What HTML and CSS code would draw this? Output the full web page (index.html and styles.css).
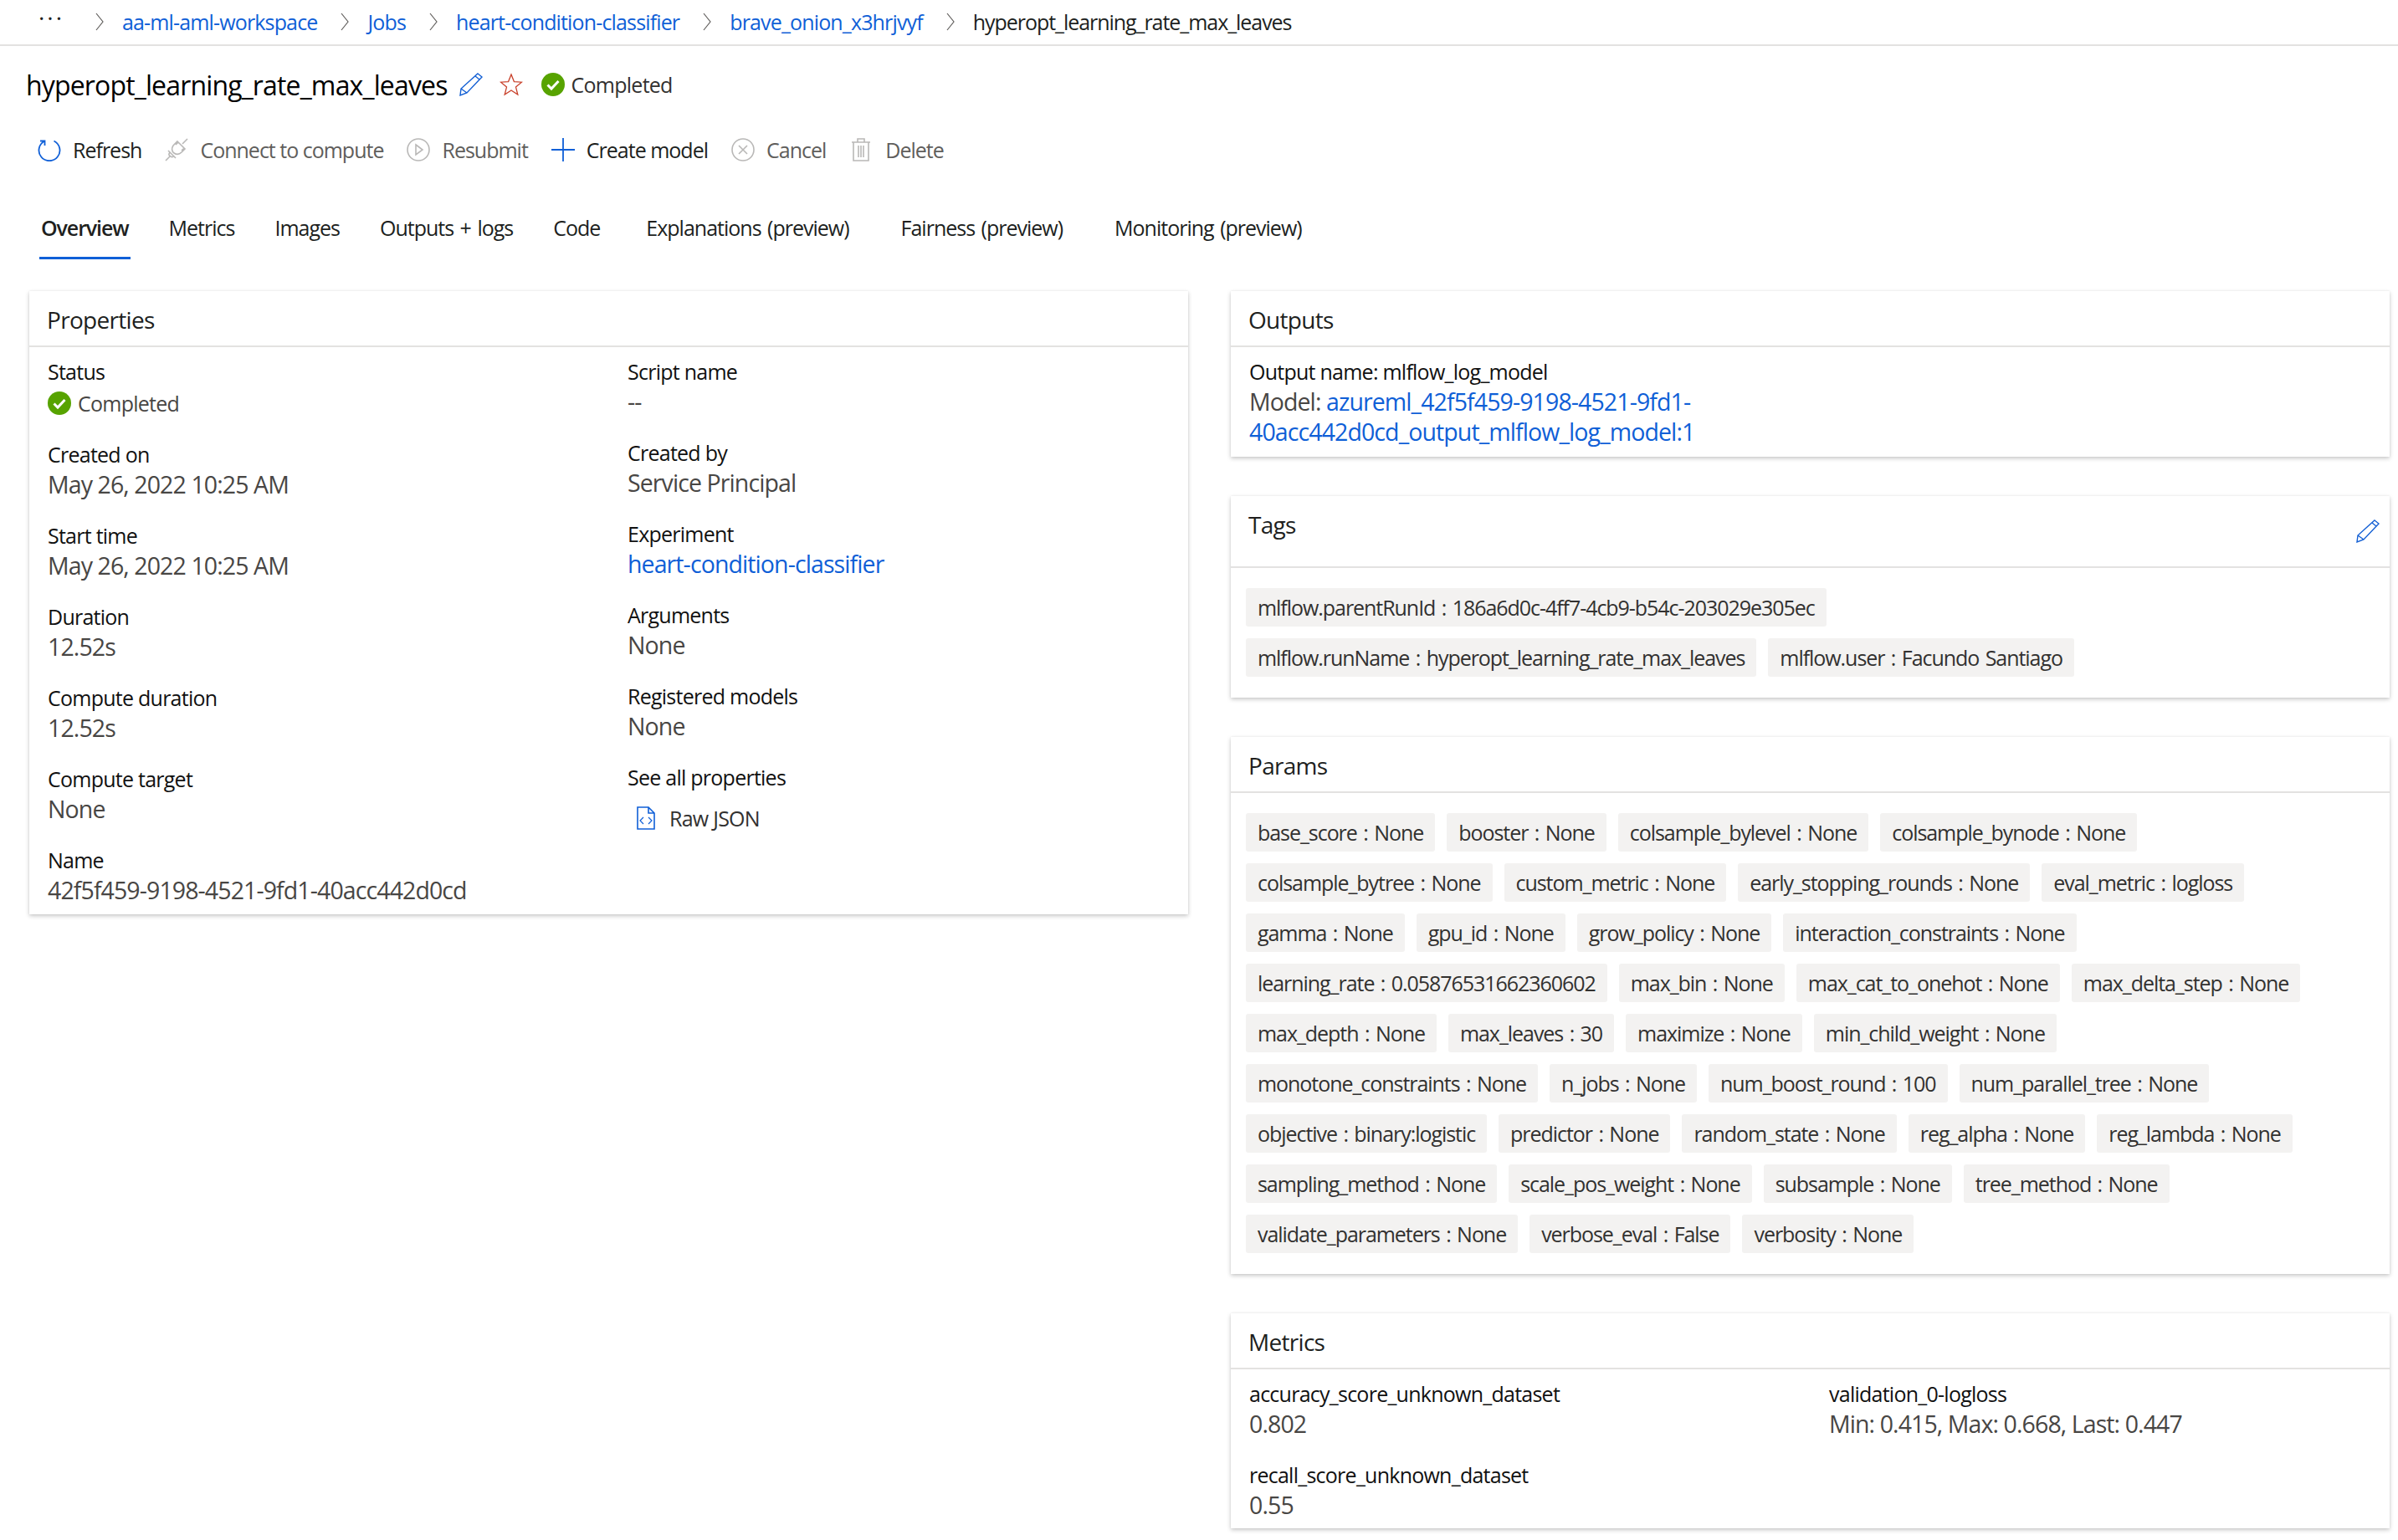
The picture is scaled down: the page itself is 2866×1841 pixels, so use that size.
FILE: index.html
```html
<!DOCTYPE html>
<html>
<head>
<title>hyperopt_learning_rate_max_leaves</title>
<link rel="stylesheet" href="styles.css">
</head>
<body>
  <div class="crumbs">
    <span class="dots">&middot;&middot;&middot;</span>
    <svg class="chev" viewBox="0 0 12 24"><path d="M2 2l8 10-8 10"/></svg>
    <a href="#">aa-ml-aml-workspace</a>
    <svg class="chev" viewBox="0 0 12 24"><path d="M2 2l8 10-8 10"/></svg>
    <a href="#">Jobs</a>
    <svg class="chev" viewBox="0 0 12 24"><path d="M2 2l8 10-8 10"/></svg>
    <a href="#">heart-condition-classifier</a>
    <svg class="chev" viewBox="0 0 12 24"><path d="M2 2l8 10-8 10"/></svg>
    <a href="#">brave_onion_x3hrjvyf</a>
    <svg class="chev" viewBox="0 0 12 24"><path d="M2 2l8 10-8 10"/></svg>
    <span class="crumb-here">hyperopt_learning_rate_max_leaves</span>
  </div>

  <div class="title-row">
    <h1>hyperopt_learning_rate_max_leaves</h1>
    <svg class="icon pencil" viewBox="0 0 28 28"><path d="M22 1l5 4L9 24l-8 3 1-8zM19 4l5 4M2 19l7 5"/></svg>
    <svg class="icon star" viewBox="0 0 28 28"><path d="M14 2l3.4 8.6 9.1.6-7 5.900 2.300 8.900-7.800-5-7.800 5 2.300-8.900-7-5.900 9.100-.6z"/></svg>
    <svg class="icon ok" viewBox="0 0 28 28"><circle cx="14" cy="14" r="14"/><path d="M7.500 14.500l4.500 4.500 8.500-9"/></svg>
    <span class="status">Completed</span>
  </div>

  <div class="toolbar">
    <div class="tool"><svg class="icon blue" viewBox="0 0 28 28"><path d="M8.500 3.500A12.500 12.500 0 1 0 19.500 3.500M8.500 9V3.500H3"/></svg>Refresh</div>
    <div class="tool off"><svg class="icon" viewBox="0 0 28 28"><path d="M1 27l6-6M21 7l6-6M15 4l9 9-4 4c-3 3-6 3-9 1s-3-6-1-9zM4 15l9 9M6 17c-2 3-1 4 1 5 1 1 3 1 4-1M13 8l3-3M20 15l3-3"/></svg>Connect to compute</div>
    <div class="tool off"><svg class="icon" viewBox="0 0 28 28"><circle cx="14" cy="14" r="13"/><path d="M11 8l8 6-8 6z"/></svg>Resubmit</div>
    <div class="tool"><svg class="icon blue" viewBox="0 0 28 28"><path d="M14 0v28M0 14h28"/></svg>Create model</div>
    <div class="tool off"><svg class="icon" viewBox="0 0 28 28"><circle cx="14" cy="14" r="13"/><path d="M9 9l10 10M19 9L9 19"/></svg>Cancel</div>
    <div class="tool off trash"><svg class="icon" viewBox="0 0 24 28"><path d="M1 5h22M3 5v22h18V5M8 5V1h8v4M9 9v14M12 9v14M15 9v14"/></svg>Delete</div>
  </div>

  <div class="tabs">
    <a class="tab active" href="#">Overview</a>
    <a class="tab" href="#">Metrics</a>
    <a class="tab" href="#">Images</a>
    <a class="tab" href="#">Outputs + logs</a>
    <a class="tab" href="#">Code</a>
    <a class="tab wide" href="#">Explanations (preview)</a>
    <a class="tab wide" href="#">Fairness (preview)</a>
    <a class="tab wide" href="#">Monitoring (preview)</a>
  </div>

  <div class="content">
    <div class="card props">
      <div class="card-head">Properties</div>
      <div class="prop-grid">
        <div>
          <div class="item status-item">
            <div class="label">Status</div>
            <div class="value with-icon"><svg class="icon ok" viewBox="0 0 28 28"><circle cx="14" cy="14" r="14"/><path d="M7.500 14.500l4.500 4.500 8.500-9"/></svg><span class="small">Completed</span></div>
          </div>
          <div class="item"><div class="label">Created on</div><div class="value">May 26, 2022 10:25 AM</div></div>
          <div class="item"><div class="label">Start time</div><div class="value">May 26, 2022 10:25 AM</div></div>
          <div class="item"><div class="label">Duration</div><div class="value">12.52s</div></div>
          <div class="item"><div class="label">Compute duration</div><div class="value">12.52s</div></div>
          <div class="item"><div class="label">Compute target</div><div class="value">None</div></div>
          <div class="item"><div class="label">Name</div><div class="value">42f5f459-9198-4521-9fd1-40acc442d0cd</div></div>
        </div>
        <div>
          <div class="item"><div class="label">Script name</div><div class="value">--</div></div>
          <div class="item"><div class="label">Created by</div><div class="value">Service Principal</div></div>
          <div class="item"><div class="label">Experiment</div><div class="value"><a href="#">heart-condition-classifier</a></div></div>
          <div class="item"><div class="label">Arguments</div><div class="value">None</div></div>
          <div class="item"><div class="label">Registered models</div><div class="value">None</div></div>
          <div class="item">
            <div class="label">See all properties</div>
            <div class="raw"><svg class="icon file" viewBox="0 0 24 28"><path d="M2 1h13l7 7v19H2zM15 1v7h7"/><path class="thin" d="M9 13l-4 4 4 4M15 13l4 4-4 4"/></svg>Raw JSON</div>
          </div>
        </div>
      </div>
    </div>

    <div class="side">
      <div class="card">
        <div class="card-head">Outputs</div>
        <div class="card-body">
          <div class="label">Output name: mlflow_log_model</div>
          <div class="value">Model: <a href="#">azureml_42f5f459-9198-4521-9fd1-<br>40acc442d0cd_output_mlflow_log_model:1</a></div>
        </div>
      </div>

      <div class="card">
        <div class="card-head tags-head">Tags
          <svg class="icon pencil" viewBox="0 0 28 28"><path d="M22 1l5 4L9 24l-8 3 1-8zM19 4l5 4M2 19l7 5"/></svg>
        </div>
        <div class="chips">
          <div class="chip-row"><span class="chip">mlflow.parentRunId : 186a6d0c-4ff7-4cb9-b54c-203029e305ec</span></div>
          <div class="chip-row"><span class="chip">mlflow.runName : hyperopt_learning_rate_max_leaves</span><span class="chip">mlflow.user : Facundo Santiago</span></div>
        </div>
      </div>

      <div class="card">
        <div class="card-head">Params</div>
        <div class="chips">
          <div class="chip-row"><span class="chip">base_score : None</span><span class="chip">booster : None</span><span class="chip">colsample_bylevel : None</span><span class="chip">colsample_bynode : None</span></div>
          <div class="chip-row"><span class="chip">colsample_bytree : None</span><span class="chip">custom_metric : None</span><span class="chip">early_stopping_rounds : None</span><span class="chip">eval_metric : logloss</span></div>
          <div class="chip-row"><span class="chip">gamma : None</span><span class="chip">gpu_id : None</span><span class="chip">grow_policy : None</span><span class="chip">interaction_constraints : None</span></div>
          <div class="chip-row"><span class="chip">learning_rate : 0.05876531662360602</span><span class="chip">max_bin : None</span><span class="chip">max_cat_to_onehot : None</span><span class="chip">max_delta_step : None</span></div>
          <div class="chip-row"><span class="chip">max_depth : None</span><span class="chip">max_leaves : 30</span><span class="chip">maximize : None</span><span class="chip">min_child_weight : None</span></div>
          <div class="chip-row"><span class="chip">monotone_constraints : None</span><span class="chip">n_jobs : None</span><span class="chip">num_boost_round : 100</span><span class="chip">num_parallel_tree : None</span></div>
          <div class="chip-row"><span class="chip">objective : binary:logistic</span><span class="chip">predictor : None</span><span class="chip">random_state : None</span><span class="chip">reg_alpha : None</span><span class="chip">reg_lambda : None</span></div>
          <div class="chip-row"><span class="chip">sampling_method : None</span><span class="chip">scale_pos_weight : None</span><span class="chip">subsample : None</span><span class="chip">tree_method : None</span></div>
          <div class="chip-row"><span class="chip">validate_parameters : None</span><span class="chip">verbose_eval : False</span><span class="chip">verbosity : None</span></div>
        </div>
      </div>

      <div class="card">
        <div class="card-head">Metrics</div>
        <div class="metric-grid">
          <div class="item"><div class="label">accuracy_score_unknown_dataset</div><div class="value">0.802</div></div>
          <div class="item"><div class="label">validation_0-logloss</div><div class="value">Min: 0.415, Max: 0.668, Last: 0.447</div></div>
          <div class="item short"><div class="label">recall_score_unknown_dataset</div><div class="value">0.55</div></div>
        </div>
      </div>
    </div>
  </div>
</body>
</html>
```
FILE: styles.css
```css
body {
  margin: 0;
  background-color: #ffffff;
  font-family: "Open Sans", "Noto Sans", sans-serif;
  font-size: 25px;
  letter-spacing: -0.75px;
  color: #201f1e;
}

a {
  color: #0f5fd7;
  text-decoration: none;
}

svg {
  flex: none;
}

.icon {
  width: 28px;
  height: 28px;
  fill: none;
  stroke: #b9b8b7;
  stroke-width: 1.6;
}

.icon.blue {
  stroke: #0f5fd7;
  stroke-width: 1.8;
}

.crumbs {
  display: flex;
  align-items: center;
  height: 51px;
  padding: 0 0 2px 46px;
  border-bottom: 2px solid #e3e2e1;
  color: #201f1e;
  letter-spacing: -0.85px;
}

.crumbs a {
  margin-right: 27px;
}

.crumb-here {
  letter-spacing: -1.05px;
}

.dots {
  width: 67px;
  font-size: 28px;
  letter-spacing: 3px;
  margin-top: -10px;
}

.chev {
  width: 12px;
  height: 24px;
  margin-right: 21px;
  fill: none;
  stroke: #605e5c;
  stroke-width: 1.2;
}

.title-row {
  display: flex;
  align-items: center;
  height: 92px;
  padding-left: 31px;
}

h1 {
  margin: 0 14px 0 0;
  font-size: 32px;
  font-weight: 500;
  letter-spacing: -0.85px;
  color: #000000;
}

.pencil {
  stroke: #1460d4;
  stroke-width: 1.4;
  margin-right: 20px;
}

.star {
  stroke: #c8402a;
  stroke-width: 1.3;
  margin-right: 22px;
}

.ok {
  stroke: none;
  margin-right: 8px;
}

.ok circle {
  fill: #57a300;
}

.ok path {
  fill: none;
  stroke: #ffffff;
  stroke-width: 3;
}

.status {
  color: #323130;
}

.toolbar {
  display: flex;
  align-items: center;
  gap: 28px;
  height: 64px;
  padding-left: 45px;
  letter-spacing: -1px;
}

.tool {
  display: flex;
  align-items: center;
  gap: 14px;
  color: #201f1e;
}

.tool.off {
  color: #605e5c;
}

.trash {
  margin-left: 2px;
}

.trash .icon {
  width: 24px;
  margin-right: 3px;
}

.tabs {
  display: flex;
  gap: 44px;
  height: 70px;
  margin-top: 29px;
  padding-left: 47px;
}

.tab {
  height: 67px;
  padding: 0 2px;
  line-height: 64px;
  letter-spacing: -1px;
  word-spacing: 2px;
  color: #201f1e;
}

.tab.active {
  border-bottom: 3px solid #0f5fd7;
  font-weight: 600;
  letter-spacing: -1.1px;
}

.tab.wide {
  margin: 0 7px;
}

.content {
  display: grid;
  grid-template-columns: 1385px 1385px;
  column-gap: 51px;
  align-items: start;
  padding: 38px 0 14px 35px;
}

.card {
  background-color: #ffffff;
  box-shadow: 0 2px 5px rgba(0, 0, 0, 0.22), 0 0 2px rgba(0, 0, 0, 0.06);
}

.card-head {
  height: 65px;
  padding-left: 21px;
  line-height: 68px;
  font-size: 28px;
  letter-spacing: -0.7px;
  border-bottom: 2px solid #e3e2e1;
  color: #201f1e;
}

.tags-head {
  display: flex;
  justify-content: space-between;
  height: 84px;
}

.tags-head .pencil {
  margin: 28px 12px 0 0;
}

.side {
  display: flex;
  flex-direction: column;
  gap: 47px;
}

.card-body {
  padding: 11px 22px 12px;
}

.label {
  height: 36px;
  line-height: 36px;
  font-weight: 500;
  color: #111111;
}

.value {
  min-height: 36px;
  line-height: 36px;
  font-size: 28.5px;
  letter-spacing: -0.9px;
  color: #484644;
}

.small {
  font-size: 25px;
  letter-spacing: -0.75px;
}

.with-icon {
  display: flex;
  align-items: center;
  min-height: 40px;
}

.prop-grid {
  display: grid;
  grid-template-columns: 693px 1fr;
  height: 667px;
  padding: 11px 22px 0;
}

.item {
  height: 97px;
}

.status-item {
  height: 99px;
}

.raw {
  display: flex;
  align-items: center;
  gap: 16px;
  height: 62px;
  padding-left: 10px;
  color: #323130;
}

.file {
  width: 24px;
  stroke: #0f5fd7;
}

.file .thin {
  stroke-width: 1.2;
}

.chips {
  display: flex;
  flex-direction: column;
  gap: 14px;
  padding: 24px 18px 25px;
  letter-spacing: -1.05px;
  word-spacing: 2px;
}

.chip-row {
  display: flex;
  gap: 14px;
}

.chip {
  height: 46px;
  padding: 0 14px;
  line-height: 46px;
  background-color: #f3f2f1;
  border-radius: 3px;
  color: #323130;
}

.metric-grid {
  display: grid;
  grid-template-columns: 693px 1fr;
  padding: 11px 22px 0;
}

.short {
  height: 82px;
}
```
